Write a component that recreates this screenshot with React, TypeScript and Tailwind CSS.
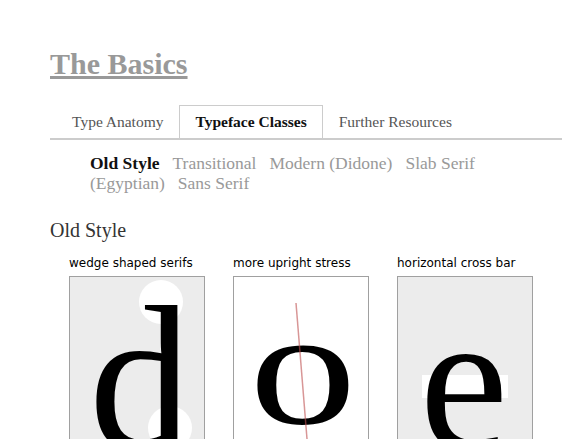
import React from "react";

const serif = "font-['Liberation_Serif','Times_New_Roman',serif]";

const tabs = ["Type Anatomy", "Typeface Classes", "Further Resources"];
const classes = ["Old Style", "Transitional", "Modern (Didone)", "Slab Serif (Egyptian)", "Sans Serif"];

function WedgeCard() {
  return (
    <svg width="134" height="198" className="block">
      <circle cx="91" cy="25" r="22" fill="#ffffff" />
      <circle cx="100" cy="151" r="22" fill="#ffffff" />
      <text x="19" y="171" fontFamily="'Liberation Serif', serif" fontSize="205" fill="#000">
        d
      </text>
    </svg>
  );
}

function StressCard() {
  return (
    <svg width="134" height="198" className="block">
      <g transform="translate(69 0) scale(1.3 1) translate(-69 0)">
        <text x="69" y="146" textAnchor="middle" fontFamily="'Liberation Serif', serif" fontSize="165" fill="#000">
          o
        </text>
      </g>
      <line x1="62" y1="26" x2="73" y2="162" stroke="rgba(190,80,80,0.6)" strokeWidth="1.5" />
    </svg>
  );
}

function CrossbarCard() {
  return (
    <svg width="134" height="198" className="block">
      <rect x="24" y="98" width="86" height="23" fill="#ffffff" />
      <text x="66" y="171" textAnchor="middle" fontFamily="'Liberation Serif', serif" fontSize="200" fill="#000">
        e
      </text>
    </svg>
  );
}

const cards = [
  { caption: "wedge shaped serifs", bg: "bg-[#ececec]", art: <WedgeCard /> },
  { caption: "more upright stress", bg: "bg-white", art: <StressCard /> },
  { caption: "horizontal cross bar", bg: "bg-[#ececec]", art: <CrossbarCard /> },
];

export default function App() {
  return (
    <div className="min-h-screen bg-white pl-[50px] pr-[10px] pt-[46px]">
      <h1 className={`${serif} text-[30px] leading-[36px] font-bold text-[#999] underline`}>
        The Basics
      </h1>

      <ul className={`${serif} mt-[23px] flex border-b-2 border-[#ccc] pl-[6px]`}>
        {tabs.map((t) => (
          <li
            key={t}
            className={
              t === "Typeface Classes"
                ? "border border-b-0 border-[#ccc] px-[15px] py-[7px] text-[15.5px] leading-[18px] font-bold text-[#111]"
                : "border border-b-0 border-transparent px-[15px] py-[7px] text-[15.5px] leading-[18px] text-[#555]"
            }
          >
            {t}
          </li>
        ))}
      </ul>

      <div className={`${serif} mt-[13px] ml-[40px] w-[440px] text-[17.5px] leading-[20px]`}>
        {classes.map((c) => (
          <span
            key={c}
            className={c === "Old Style" ? "mr-[13px] font-bold text-[#111]" : "mr-[13px] text-[#999]"}
          >
            {c}
          </span>
        ))}
      </div>

      <h2 className={`${serif} mt-[25px] text-[20px] leading-[24px] text-[#333]`}>Old Style</h2>

      <div className="mt-[14px] flex gap-[28px] pl-[19px]">
        {cards.map((c) => (
          <div key={c.caption} className="w-[136px]">
            <p className="font-['DejaVu_Sans',sans-serif] text-[12px] leading-[14px] text-black whitespace-nowrap">
              {c.caption}
            </p>
            <div className={`mt-[6px] h-[200px] border border-[#a0a0a0] ${c.bg}`}>{c.art}</div>
          </div>
        ))}
      </div>
    </div>
  );
}
